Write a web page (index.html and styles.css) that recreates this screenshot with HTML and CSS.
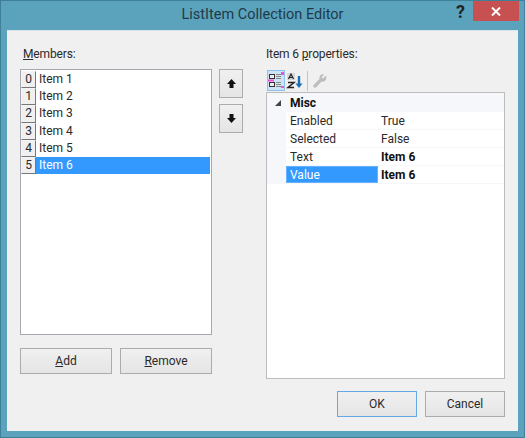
FILE: index.html
```html
<!DOCTYPE html>
<html>
<head>
<meta charset="utf-8">
<title>ListItem Collection Editor</title>
<link rel="stylesheet" href="styles.css">
</head>
<body>
<div class="window">
  <div class="titlebar">
    <div></div>
    <div class="title">ListItem Collection Editor</div>
    <div class="controls">
      <span class="help">?</span>
      <span class="close">
        <svg width="10" height="9" viewBox="0 0 10 9"><path d="M1 0.5L9 8.5M9 0.5L1 8.5" stroke="#fff" stroke-width="2"/></svg>
      </span>
    </div>
  </div>
  <div class="content">
    <div class="panes">
      <div class="left">
        <div class="label members"><u>M</u>embers:</div>
        <div class="listrow">
          <div class="list">
            <div class="item"><span class="idx">0</span><span class="name">Item 1</span></div>
            <div class="item"><span class="idx">1</span><span class="name">Item 2</span></div>
            <div class="item"><span class="idx">2</span><span class="name">Item 3</span></div>
            <div class="item"><span class="idx">3</span><span class="name">Item 4</span></div>
            <div class="item"><span class="idx">4</span><span class="name">Item 5</span></div>
            <div class="item selected"><span class="idx">5</span><span class="name">Item 6</span></div>
          </div>
          <div class="arrows">
            <button class="btn arrow">
              <svg width="11" height="11" viewBox="0 0 11 11"><path d="M5.5 1L10 6H7.5V10H3.5V6H1Z" fill="#111"/></svg>
            </button>
            <button class="btn arrow">
              <svg width="11" height="11" viewBox="0 0 11 11"><path d="M5.5 10L10 5H7.5V1H3.5V5H1Z" fill="#111"/></svg>
            </button>
          </div>
        </div>
        <div class="listbtns">
          <button class="btn wide"><u>A</u>dd</button>
          <button class="btn wide"><u>R</u>emove</button>
        </div>
      </div>
      <div class="right">
        <div class="label">Item 6 <u>p</u>roperties:</div>
        <div class="toolbar">
          <span class="tool active">
            <svg width="16" height="17" viewBox="0 0 16 17">
              <rect x="1.500" y="2.500" width="5" height="4" fill="#eee" stroke="#333"/>
              <rect x="1.500" y="10.500" width="5" height="4" fill="#eee" stroke="#333"/>
              <path d="M8 2.500h5M8 4.500h5M8 6.500h5M8 10.500h5M8 12.500h5M8 14.500h5" stroke="#888"/>
              <path d="M13 0h3v3h-3zM0 7.500h6v2H0zM13 14h3v2h-3z" fill="#f050e0"/>
            </svg>
          </span>
          <span class="tool">
            <svg width="18" height="18" viewBox="0 0 18 18">
              <rect x="1" y="1" width="8" height="7" fill="#d8d8d8"/>
              <path d="M2.500 7L5 2L7.500 7M3.500 5.500H6.500" stroke="#222" fill="none" stroke-width="1.200"/>
              <path d="M2 10.500H8L2 15.500H8" stroke="#222" fill="none" stroke-width="1.500"/>
              <path d="M13 4V14" stroke="#1a6fb5" stroke-width="2.400"/>
              <path d="M9.500 11.500H16.500L13 16Z" fill="#1a6fb5"/>
            </svg>
          </span>
          <span class="sep"></span>
          <span class="tool">
            <svg width="16" height="16" viewBox="0 0 16 16"><path d="M14 2.500L11 5.500L9.500 4.500L12 1.500C9.500 0.500 7 2.500 7.500 6L2 11.500C1 12.500 1 13.500 1.800 14.200C2.600 15 3.600 14.800 4.500 14L9.500 8.500C13 9.500 15.200 6 14 2.500Z" fill="#bdbdbd"/></svg>
          </span>
        </div>
        <div class="grid">
          <div class="cat"><span class="tri"></span>Misc</div>
          <div class="prop"><span class="pname">Enabled</span><span class="pval">True</span></div>
          <div class="prop"><span class="pname">Selected</span><span class="pval">False</span></div>
          <div class="prop"><span class="pname">Text</span><span class="pval bold">Item 6</span></div>
          <div class="prop"><span class="pname current">Value</span><span class="pval bold">Item 6</span></div>
        </div>
      </div>
    </div>
    <div class="footer">
      <button class="btn footbtn default">OK</button>
      <button class="btn footbtn">Cancel</button>
    </div>
  </div>
</div>
</body>
</html>
```

FILE: styles.css
```css
html, body {
  margin: 0;
  padding: 0;
}
body {
  width: 525px;
  height: 438px;
  overflow: hidden;
  font-family: Roboto, "Noto Sans", sans-serif;
  font-size: 12px;
  color: #2a2a2a;
}
.window {
  box-sizing: border-box;
  width: 525px;
  height: 438px;
  background: #5ba3bd;
  border: 1px solid #3f7f99;
  padding: 0 6px 6px 6px;
  display: flex;
  flex-direction: column;
}
.titlebar {
  height: 29px;
  flex: none;
  display: grid;
  grid-template-columns: 1fr auto 1fr;
}
.title {
  font-size: 14.500px;
  line-height: 28px;
  color: #1f3a4a;
}
.controls {
  display: flex;
  justify-content: flex-end;
  align-items: flex-start;
  margin-right: -1px;
}
.help {
  font-weight: bold;
  font-size: 18px;
  line-height: 21px;
  color: #222;
  margin-right: 8px;
}
.close {
  width: 46px;
  height: 20px;
  background: #c75050;
  display: flex;
  align-items: center;
  justify-content: center;
}
.content {
  flex: 1;
  background: #f0f0f0;
  padding: 16px 13px 0 13px;
  border-top: 1px solid #d8e4ea;
  box-sizing: border-box;
}
.panes {
  display: flex;
  height: 332px;
}
.left {
  width: 223px;
  margin-right: 23px;
}
.right {
  width: 239px;
}
.label {
  height: 22px;
  line-height: 14px;
  letter-spacing: -0.15px;
}
.members {
  padding-left: 3px;
}
.listrow {
  display: flex;
  gap: 7px;
}
.list {
  box-sizing: border-box;
  width: 193px;
  height: 266px;
  background: #fff;
  border: 1px solid #a8a8b0;
  padding: 1px 1px 0 0;
}
.item {
  display: flex;
  height: 17.200px;
  line-height: 17px;
}
.idx {
  box-sizing: border-box;
  width: 15px;
  flex: none;
  text-align: center;
  background: #f0f0f0;
  border: 1px solid;
  border-color: #f4f4f4 #777 #777 #f4f4f4;
  line-height: 15px;
}
.name {
  flex: 1;
  padding-left: 3px;
}
.selected .name {
  background: #3399ff;
  color: #fff;
}
.arrows {
  display: flex;
  flex-direction: column;
  gap: 6px;
}
.btn {
  box-sizing: border-box;
  border: 1px solid #acacac;
  background: linear-gradient(#f0f0f0, #e5e5e5);
  font-family: inherit;
  font-size: 12px;
  color: #2a2a2a;
  padding: 0;
}
.arrow {
  width: 24px;
  height: 29px;
  display: flex;
  align-items: center;
  justify-content: center;
}
.listbtns {
  display: flex;
  gap: 8px;
  margin-top: 13px;
}
.wide {
  width: 92px;
  height: 26px;
}
.toolbar {
  height: 23px;
  display: flex;
  align-items: center;
  padding-left: 1px;
  gap: 1px;
}
.tool {
  width: 18px;
  height: 21px;
  box-sizing: border-box;
  display: flex;
  align-items: center;
  justify-content: center;
  flex: none;
}
.tool.active {
  background: #cde4f7;
  border: 1px solid #8fc0e8;
}
.sep {
  width: 1px;
  height: 20px;
  background: #c4c4c4;
  margin: 0 2px;
}
.grid {
  box-sizing: border-box;
  height: 287px;
  background: #fff;
  border: 1px solid #bcbcbc;
}
.cat {
  box-sizing: border-box;
  height: 19px;
  padding-top: 1px;
  font-weight: bold;
  color: #111;
  background: #f5f7fb;
  display: flex;
  align-items: center;
}
.tri {
  width: 0;
  height: 0;
  margin: 0 9px 0 8px;
  border-style: solid;
  border-width: 0 0 6px 6px;
  border-color: transparent transparent #444 transparent;
}
.prop {
  display: flex;
  height: 18px;
  line-height: 19px;
  background: #f5f7fb;
  padding-left: 19px;
}
.pname {
  box-sizing: border-box;
  width: 92px;
  padding-left: 4px;
  background: #fff;
  margin-bottom: 1px;
}
.pval {
  flex: 1;
  padding-left: 3px;
  background: #fff;
  margin-bottom: 1px;
}
.current {
  background: #3399ff;
  color: #fff;
  border: 1px solid #66b2ff;
  line-height: 17px;
  padding-left: 3px;
}
.bold {
  font-weight: bold;
  color: #111;
}
.footer {
  display: flex;
  justify-content: flex-end;
  gap: 8px;
  margin-top: 12px;
}
.footbtn {
  width: 80px;
  height: 26px;
}
.default {
  border-color: #66a7e8;
}
```
